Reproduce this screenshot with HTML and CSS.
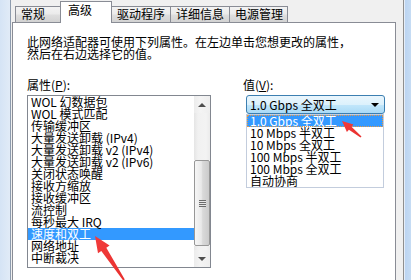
FILE: index.html
```html
<!DOCTYPE html>
<html lang="zh-CN">
<head>
  <meta charset="UTF-8" />
  <meta name="viewport" content="width=device-width, initial-scale=1.0"/>
  <title>高级</title>
  <link rel="stylesheet" href="styles.css">
</head>
<body>

  <div class="frame-left"></div>

  <div class="dialog">
    <div class="tabs">
      <div class="tab tab-general">常规</div>
      <div class="tab tab-advanced active">高级</div>
      <div class="tab tab-driver">驱动程序</div>
      <div class="tab tab-details">详细信息</div>
      <div class="tab tab-power">电源管理</div>
    </div>

    <div class="panel">
      <p class="desc">此网络适配器可使用下列属性。在左边单击您想更改的属性，<br>然后在右边选择它的值。</p>

      <div class="cols">
        <div class="col-left">
          <div class="label">属性(<u>P</u>):</div>
          <div class="listbox">
            <ul class="items">
              <li>WOL 幻数据包</li>
              <li>WOL 模式匹配</li>
              <li>传输缓冲区</li>
              <li>大量发送卸载 (IPv4)</li>
              <li>大量发送卸载 v2 (IPv4)</li>
              <li>大量发送卸载 v2 (IPv6)</li>
              <li>关闭状态唤醒</li>
              <li>接收方缩放</li>
              <li>接收缓冲区</li>
              <li>流控制</li>
              <li>每秒最大 IRQ</li>
              <li class="selected">速度和双工</li>
              <li>网络地址</li>
              <li>中断裁决</li>
            </ul>
            <div class="scrollbar">
              <div class="sb-btn"><span class="arrow-up"></span></div>
              <div class="sb-track sb-track-top"></div>
              <div class="sb-thumb"><span class="grip"></span></div>
              <div class="sb-track sb-track-bottom"></div>
              <div class="sb-btn"><span class="arrow-down"></span></div>
            </div>
          </div>
        </div>

        <div class="col-right">
          <div class="label">值(<u>V</u>):</div>
          <div class="combo-wrap">
            <div class="combo">
              <span>1.0 Gbps 全双工</span>
              <span class="caret"></span>
            </div>
            <ul class="dropdown">
              <li class="selected">1.0 Gbps 全双工</li>
              <li>10 Mbps 半双工</li>
              <li>10 Mbps 全双工</li>
              <li>100 Mbps 半双工</li>
              <li>100 Mbps 全双工</li>
              <li>自动协商</li>
            </ul>
          </div>
        </div>
      </div>
    </div>
  </div>

  <div class="frame-right"></div>

  <!-- red annotation arrows drawn over the screenshot -->
  <svg class="marks" width="411" height="280" viewBox="0 0 411 280">
    <defs>
      <linearGradient id="red" x1="0" y1="0" x2="1" y2="1">
        <stop offset="0" stop-color="#f23c3c"/>
        <stop offset="1" stop-color="#e8302e"/>
      </linearGradient>
    </defs>
    <polygon fill="url(#red)" points="95,236 109.6,245.6 106.3,247.8 124.8,279.5 123.2,280.5 101.3,251.1 98,253.3"/>
    <polygon fill="url(#red)" points="342,121 353.5,124.6 351.5,126.8 361.5,136.5 360.5,137.5 348.9,129.8 346.9,132"/>
  </svg>

</body>
</html>
```

FILE: styles.css
```css
body {
  margin: 0;
  width: 411px;
  height: 280px;
  overflow: hidden;
  display: flex;
  font-family: "Noto Sans CJK SC", sans-serif;
  font-size: 12px;
  color: #000;
  background: #c9ddf3;
}

ul {
  list-style: none;
  margin: 0;
  padding: 0;
}

.frame-left {
  width: 10px;
  background: linear-gradient(to right, #d5e4f5, #e1ebf7);
}

.frame-right {
  flex: 1;
  border-left: 1px solid #e6eef8;
  background: linear-gradient(to right, #bcd5f2, #c6dcf4);
}

.dialog {
  width: 394px;
  box-sizing: border-box;
  border-left: 1px solid #8d9bad;
  border-right: 1px solid #8f8f8f;
  background: #f0f0f0;
}

/* tabs */

.tabs {
  display: flex;
  align-items: flex-end;
  height: 22px;
  padding-left: 4px;
}

.tab {
  box-sizing: border-box;
  height: 16px;
  margin-right: -1px;
  padding-left: 5px;
  line-height: 14px;
  white-space: nowrap;
  border: 1px solid #898c95;
  border-bottom: none;
  background: linear-gradient(#f3f3f3, #ebebeb 45%, #dedede 55%, #d2d2d2);
}

.tab.active {
  position: relative;
  z-index: 1;
  height: 22px;
  margin-bottom: -1px;
  padding-left: 7px;
  padding-top: 1px;
  background: #fff;
}

.tab-general { width: 46px; }
.tab-advanced { width: 52px; }
.tab-driver { width: 60px; }
.tab-details { width: 60px; }
.tab-power { width: 59px; }

/* page */

.panel {
  width: 384px;
  height: 258px;
  margin-left: 1px;
  box-sizing: border-box;
  padding: 13px 0 0 14px;
  border: 1px solid #898c95;
  border-bottom: none;
  background: #fff;
}

.desc {
  margin: 0;
  line-height: 12px;
  white-space: nowrap;
}

.cols {
  display: flex;
  margin-top: 19px;
}

.label {
  line-height: 12px;
  height: 12px;
}

.col-left {
  width: 184px;
}

.col-right {
  margin-left: 32px;
}

/* property list */

.listbox {
  display: flex;
  height: 173px;
  margin-top: 4px;
  box-sizing: border-box;
  border: 1px solid #828790;
}

.items {
  flex: 1;
  overflow: hidden;
}

.items li {
  height: 12px;
  line-height: 12px;
  padding-left: 3px;
  white-space: nowrap;
}

.items li.selected {
  background: #3399ff;
  color: #fff;
}

.scrollbar {
  width: 16px;
  display: flex;
  flex-direction: column;
}

.sb-btn {
  height: 17px;
  display: flex;
  align-items: center;
  justify-content: center;
  background: linear-gradient(to right, #ececec, #f4f4f4 40%, #eeeeee);
}

.arrow-up,
.arrow-down {
  width: 0;
  height: 0;
  border-left: 4px solid transparent;
  border-right: 4px solid transparent;
}

.arrow-up {
  border-bottom: 4px solid #4e4e4e;
}

.arrow-down {
  border-top: 4px solid #4e4e4e;
}

.sb-track {
  background: linear-gradient(to right, #e5e5e5, #f1f1f1 25%, #f3f3f3 75%, #ebebeb);
}

.sb-track-top {
  height: 47px;
}

.sb-track-bottom {
  flex: 1;
}

.sb-thumb {
  height: 86px;
  box-sizing: border-box;
  border: 1px solid #979797;
  border-radius: 2px;
  display: flex;
  align-items: center;
  justify-content: center;
  background: linear-gradient(to right, #f6f6f6, #e9e9e9 45%, #d9d9d9 55%, #cbcbcb);
}

.grip {
  width: 7px;
  height: 7px;
  background: repeating-linear-gradient(#6b6b6b 0, #6b6b6b 1px, #e6e6e6 1px, #e6e6e6 2px);
}

/* value combo */

.combo-wrap {
  position: relative;
  margin-top: 4px;
  margin-left: 3px;
}

.combo {
  width: 139px;
  height: 19px;
  box-sizing: border-box;
  display: flex;
  align-items: center;
  justify-content: space-between;
  padding: 0 5px 0 3px;
  line-height: 17px;
  white-space: nowrap;
  border: 1px solid #3c7fb1;
  border-radius: 3px;
  background: linear-gradient(#eaf6fd, #dcf1fc 50%, #c3e7fb 50%, #a9daf6);
}

.caret {
  width: 0;
  height: 0;
  border-left: 4px solid transparent;
  border-right: 4px solid transparent;
  border-top: 4px solid #000;
}

.dropdown {
  position: absolute;
  top: 19px;
  left: 0;
  width: 138px;
  box-sizing: border-box;
  border: 1px solid #c3cddd;
  background: #fff;
}

.dropdown li {
  height: 12px;
  line-height: 12px;
  padding-left: 3px;
  white-space: nowrap;
}

.dropdown li.selected {
  background: #3399ff;
  color: #fff;
  outline: 1px dotted #e39a4a;
  outline-offset: -1px;
}

.marks {
  position: absolute;
  top: 0;
  left: 0;
  pointer-events: none;
}
```
